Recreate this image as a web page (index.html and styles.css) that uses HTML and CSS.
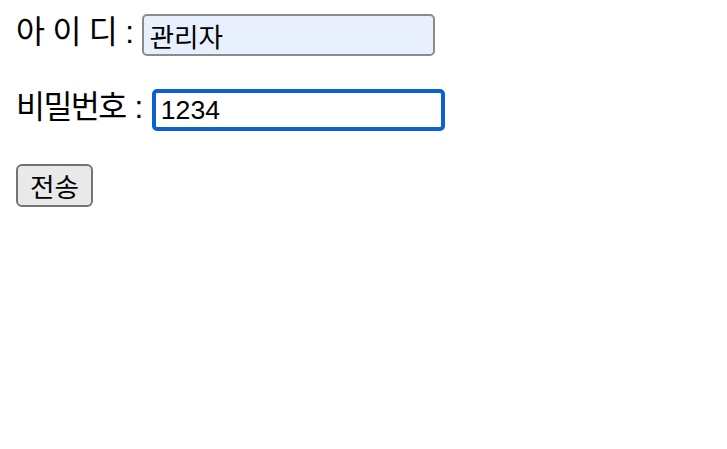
FILE: index.html
```html
<!DOCTYPE html>
<html lang="ko">
<head>
<meta charset="utf-8">
<title>로그인</title>
<link rel="stylesheet" href="styles.css">
</head>
<body>
<form class="login-form">
  <div class="row">
    <span class="label">아 이 디 :</span>
    <input class="field field-id" type="text" value="관리자">
  </div>
  <div class="row">
    <span class="label">비밀번호 :</span>
    <input class="field field-pw" type="text" value="1234">
  </div>
  <div class="row row-btn">
    <button class="submit" type="button">전송</button>
  </div>
</form>
</body>
</html>
```
FILE: styles.css
```css
html, body {
  margin: 0;
  padding: 0;
  background: #ffffff;
}

body {
  font-family: "Liberation Sans", "Noto Sans CJK KR", sans-serif;
  color: #000000;
}

.login-form {
  display: flex;
  flex-direction: column;
  gap: 33px;
  padding: 14px 16px;
}

.row {
  display: flex;
  align-items: center;
  height: 42px;
  gap: 10px;
}

.label {
  font-size: 31.5px;
  letter-spacing: -1.6px;
  word-spacing: 1.9px;
  line-height: 42px;
  position: relative;
  top: -3px;
}

.field {
  box-sizing: border-box;
  width: 293px;
  height: 42px;
  margin: 0;
  padding: 0 5px;
  font-family: "Liberation Sans", "Noto Sans CJK KR", sans-serif;
  font-size: 26.67px;
  color: #000000;
  border-radius: 5px;
}

.field-id {
  background: #e8f0fe;
  border: 2px solid #8b8b8b;
}

.field-pw {
  background: #ffffff;
  border: 4px solid #0a62cf;
  padding-left: 5px;
  outline: none;
}

.row-btn {
  height: 43px;
}

.submit {
  box-sizing: border-box;
  width: 77px;
  height: 43px;
  margin: 0;
  padding: 0;
  font-family: "Liberation Sans", "Noto Sans CJK KR", sans-serif;
  font-size: 26.67px;
  color: #000000;
  background: #e9e9e9;
  border: 2px solid #747474;
  border-radius: 6px;
}
```
